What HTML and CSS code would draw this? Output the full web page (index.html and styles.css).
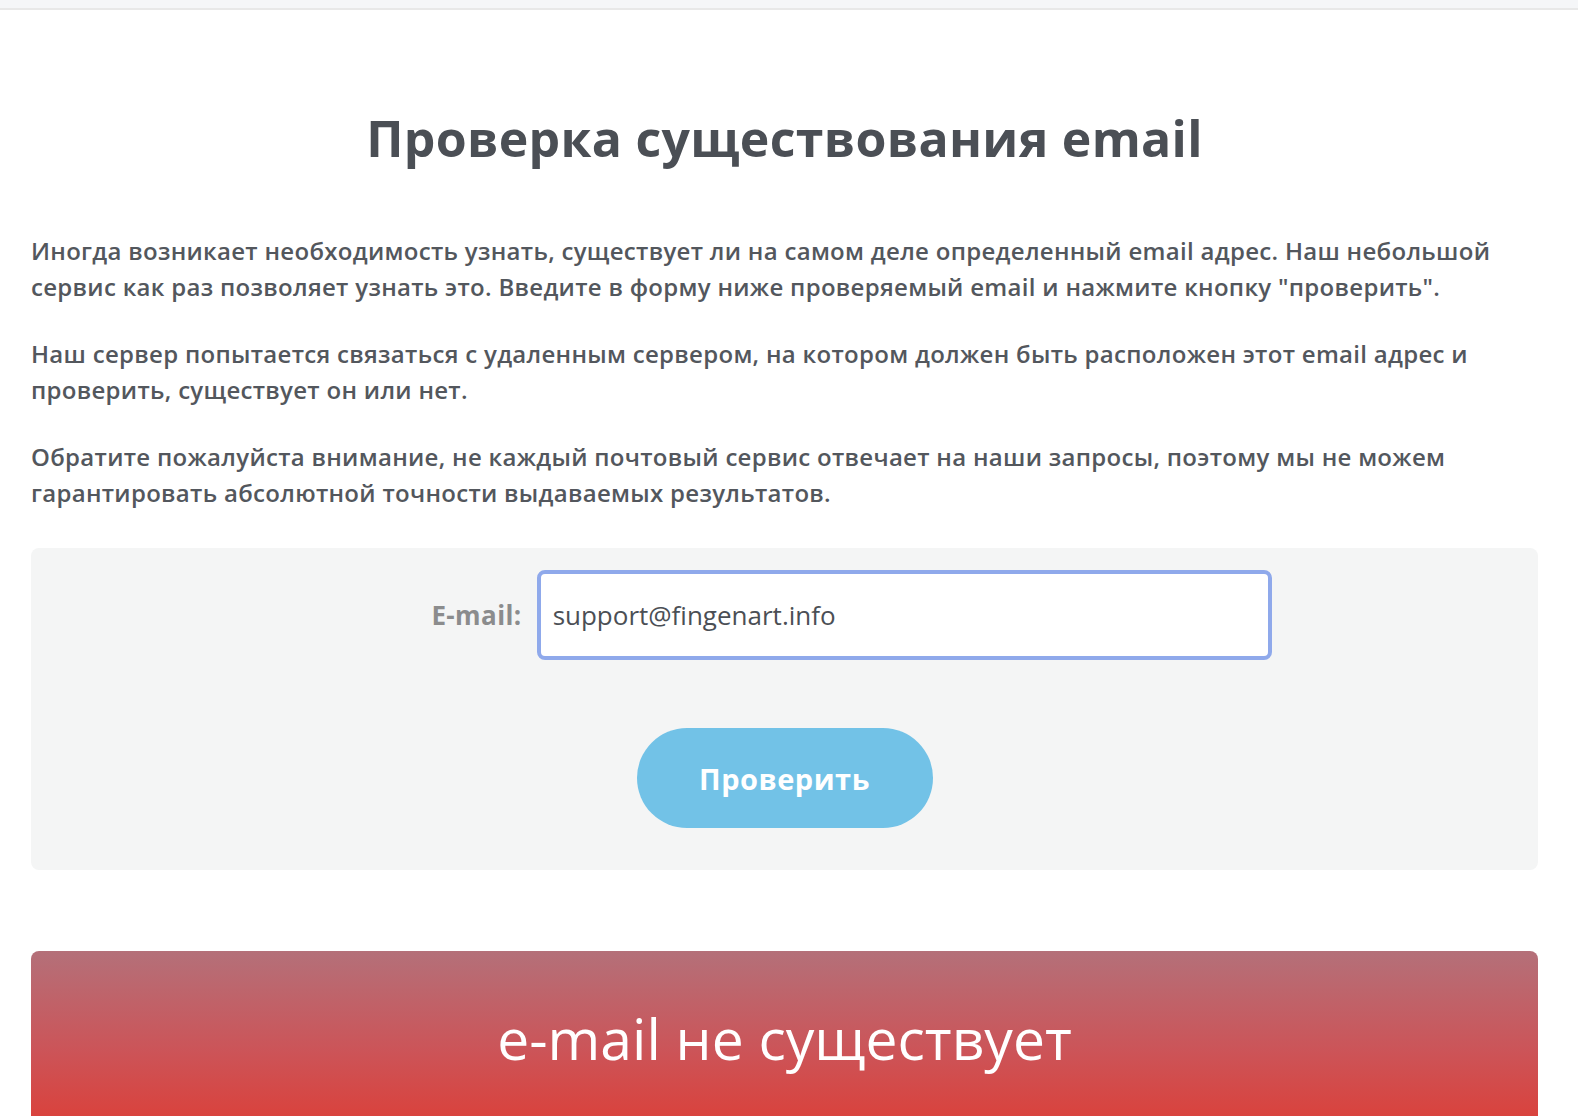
FILE: index.html
```html
<!DOCTYPE html>
<html lang="ru">
<head>
    <meta charset="UTF-8">
    <meta name="viewport" content="width=device-width, initial-scale=1.0">
    <title>Проверка существования email</title>
    <link rel="stylesheet" href="styles.css">
</head>
<body>

    <div class="topbar"></div>

    <div class="content">
        <h1>Проверка существования email</h1>

        <p>Иногда возникает необходимость узнать, существует ли на самом деле определенный email адрес. Наш небольшой сервис как раз позволяет узнать это. Введите в форму ниже проверяемый email и нажмите кнопку "проверить".</p>
        <p>Наш сервер попытается связаться с удаленным сервером, на котором должен быть расположен этот email адрес и проверить, существует он или нет.</p>
        <p>Обратите пожалуйста внимание, не каждый почтовый сервис отвечает на наши запросы, поэтому мы не можем гарантировать абсолютной точности выдаваемых результатов.</p>

        <!-- Form for checking email -->
        <form class="check-form">
            <div class="form-row">
                <label for="email">E-mail:</label>
                <input type="text" id="email" value="support@fingenart.info">
            </div>
            <button type="submit" class="check-btn">Проверить</button>
        </form>

        <!-- Result -->
        <div class="result">e-mail не существует</div>
    </div>

</body>
</html>
```

FILE: styles.css
```css
body {
    font-family: "Open Sans", Arial, sans-serif;
    margin: 0;
    padding: 0;
    background-color: #fff;
    color: #53575d;
}

.topbar {
    height: 8px;
    background-color: #f5f6f8;
    border-bottom: 2px solid #e8e8e8;
}

.content {
    padding: 0 40px 0 31px;
}

h1 {
    margin: 96px 0 0;
    text-align: center;
    font-size: 50px;
    line-height: 64px;
    font-weight: 700;
    color: #4b4f55;
    letter-spacing: 0.3px;
}

.content p {
    margin: 63px 0 0;
    font-size: 24px;
    line-height: 36px;
    font-weight: 600;
    letter-spacing: 0.3px;
}

.content p + p {
    margin-top: 31px;
}

/* Form block */
.check-form {
    margin-top: 37px;
    background-color: #f4f5f5;
    border-radius: 8px;
    padding: 22px 0 42px;
    display: flex;
    flex-direction: column;
    align-items: center;
}

.form-row {
    display: flex;
    align-items: center;
    margin-left: 134px;
}

.form-row label {
    font-size: 26px;
    font-weight: 700;
    color: #8b8c8d;
    letter-spacing: 0.4px;
    margin-right: 15px;
}

.form-row input {
    width: 735px;
    height: 90px;
    box-sizing: border-box;
    border: 4px solid #8fa9eb;
    border-radius: 8px;
    padding: 0 12px;
    font-family: "Open Sans", Arial, sans-serif;
    font-size: 26px;
    color: #4b4f55;
    background: #fff;
    outline: none;
}

.check-btn {
    margin-top: 68px;
    width: 296px;
    height: 100px;
    border: none;
    border-radius: 50px;
    background-color: #72c2e7;
    color: #fff;
    font-family: "Open Sans", Arial, sans-serif;
    font-size: 29px;
    font-weight: 700;
    letter-spacing: 0.5px;
    cursor: pointer;
}

.result {
    margin-top: 81px;
    height: 200px;
    border-radius: 8px 8px 0 0;
    background: linear-gradient(to bottom, #b47079 0%, #cc5458 50%, #e0392f 100%);
    color: #fff;
    text-align: center;
    font-size: 57px;
    font-weight: 500;
    padding-top: 48px;
    box-sizing: border-box;
}
```
